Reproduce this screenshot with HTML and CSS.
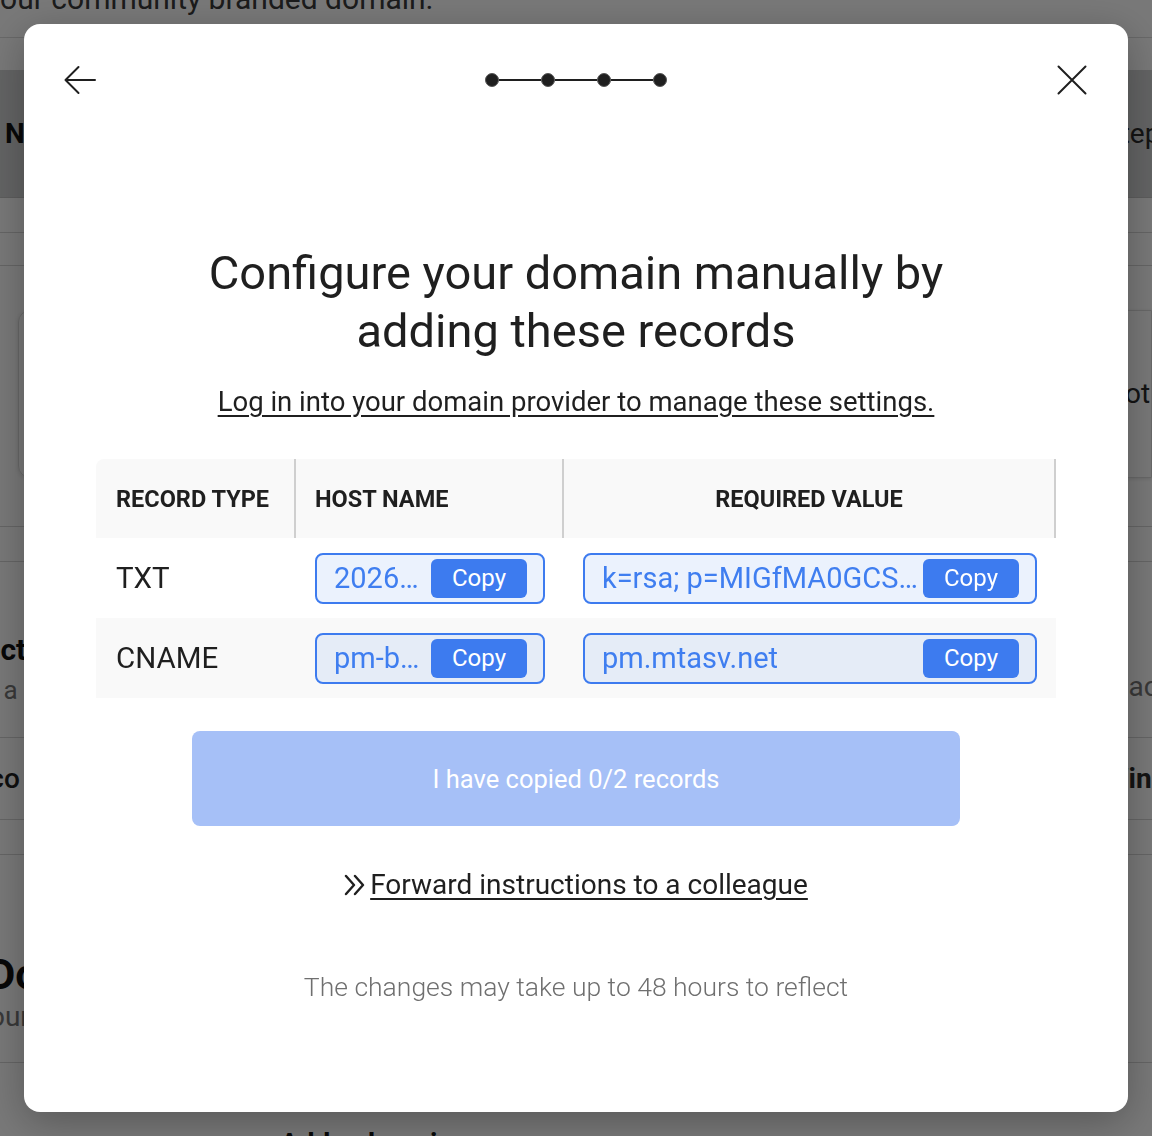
FILE: index.html
```html
<!DOCTYPE html>
<html>
<head>
	<meta charset="utf-8">
	<title>Custom domain</title>
	<link rel="stylesheet" href="styles.css">
</head>
<body>
	<!-- settings page behind the dialog -->
	<div class="page">
		<div class="intro"><p>Your community branded domain.</p></div>
		<div class="band bgRow">
			<span class="l bold">Name</span>
			<span class="r">Step</span>
		</div>
		<div class="line h35"></div>
		<div class="line h33"></div>
		<div class="bgCard bgRow">
			<span class="l"></span>
			<span class="r">Not</span>
		</div>
		<div class="line h49"></div>
		<div class="line h35"></div>
		<div class="bgSection">
			<div class="bgRow"><span class="l bold secTitle">Connect</span><span class="r"></span></div>
			<div class="bgRow"><span class="l grey secSub">Use a</span><span class="r grey">Place</span></div>
		</div>
		<div class="bgRow bgItem">
			<span class="l medium itemName">Deco</span>
			<span class="r bold">Win</span>
		</div>
		<div class="line h35"></div>
		<div class="bgSection tall">
			<div class="bgRow"><span class="l bold headTitle">Domain</span><span class="r"></span></div>
			<div class="bgRow"><span class="l grey headSub">Your</span><span class="r"></span></div>
		</div>
		<div class="bgRow bgFoot"><span class="l bold footText">Add a domain</span></div>
	</div>

	<div class="overlay">
		<div class="modal">
			<div class="topBar">
				<button class="iconBtn" title="Back">
					<svg width="32" height="32" viewBox="0 0 32 32" fill="none" stroke="#1f1f1f" stroke-width="2" stroke-linecap="round" stroke-linejoin="round">
						<path d="M31 16H1.5M14.5 3L1.5 16l13 13"/>
					</svg>
				</button>
				<div class="stepper">
					<span class="dot"></span><span class="link"></span>
					<span class="dot"></span><span class="link"></span>
					<span class="dot"></span><span class="link"></span>
					<span class="dot"></span>
				</div>
				<button class="iconBtn" title="Close">
					<svg width="32" height="32" viewBox="0 0 32 32" fill="none" stroke="#1f1f1f" stroke-width="2" stroke-linecap="round">
						<path d="M2.5 2.5l27 27M29.5 2.5l-27 27"/>
					</svg>
				</button>
			</div>

			<h1 class="title">Configure your domain manually by adding these records</h1>
			<a href="#" class="subLink">Log in into your domain provider to manage these settings.</a>

			<div class="records">
				<div class="recRow recHead">
					<div class="cell">RECORD TYPE</div>
					<div class="cell">HOST NAME</div>
					<div class="cell center">REQUIRED VALUE</div>
				</div>
				<div class="recRow">
					<div class="cell">TXT</div>
					<div class="cell">
						<div class="copyField"><span class="val">20260318pm._domainkey</span><button class="copyBtn">Copy</button></div>
					</div>
					<div class="cell">
						<div class="copyField"><span class="val">k=rsa; p=MIGfMA0GCSqGSIb3DQEBAQUAA4GNADCBiQKBgQC</span><button class="copyBtn">Copy</button></div>
					</div>
				</div>
				<div class="recRow alt">
					<div class="cell">CNAME</div>
					<div class="cell">
						<div class="copyField"><span class="val">pm-bounces</span><button class="copyBtn">Copy</button></div>
					</div>
					<div class="cell">
						<div class="copyField"><span class="val">pm.mtasv.net</span><button class="copyBtn">Copy</button></div>
					</div>
				</div>
			</div>

			<button class="doneBtn" disabled>I have copied 0/2 records</button>

			<div class="forward">
				<svg width="24" height="24" viewBox="0 0 24 24" fill="none" stroke="#1f1f1f" stroke-width="2.4" stroke-linecap="round" stroke-linejoin="round">
					<path d="M2 3l8 9-8 9M11 3l8 9-8 9"/>
				</svg>
				<a href="#">Forward instructions to a colleague</a>
			</div>

			<p class="note">The changes may take up to 48 hours to reflect</p>
		</div>
	</div>
</body>
</html>
```

FILE: styles.css
```css
*{
	margin: 0;
	padding: 0;
	box-sizing: border-box;
}
body{
	width: 1152px;
	height: 1136px;
	overflow: hidden;
	background-color: #fff;
	font-family: Roboto, "Liberation Sans", sans-serif;
	color: #1f1f1f;
}

/* page behind */
.page{
	height: 1136px;
	overflow: hidden;
}
.bgRow{
	display: flex;
	align-items: center;
}
.bgRow .l{
	width: 1104px;
	flex-shrink: 0;
	white-space: nowrap;
	font-size: 28px;
	line-height: 34px;
}
.bgRow .r{
	white-space: nowrap;
	font-size: 28px;
	line-height: 34px;
	color: #2a2a2a;
}
.bold{ font-weight: 700; color: #111; }
.medium{ font-weight: 500; }
.grey{ color: #777 !important; }
.intro{
	display: flow-root;
	height: 38px;
	border-bottom: 1px solid #dcdcdc;
	margin-bottom: 32px;
}
.intro p{
	font-size: 30px;
	line-height: 34px;
	margin-top: -18px;
	margin-left: -17px;
	color: #3a3a3a;
}
.band{
	height: 128px;
	background-color: #d2d3d4;
	border-bottom: 1px solid #c4c4c4;
}
.band .l{ padding-left: 5px; }
.line{
	border-bottom: 1px solid #d6d6d6;
}
.h35{ height: 35px; }
.h33{ height: 33px; }
.h49{ height: 49px; }
.bgCard{
	height: 168px;
	margin: 44px 0 0 18px;
	border: 1px solid #dcdcdc;
	border-radius: 12px 0 0 12px;
	box-shadow: 0 1px 4px rgba(0,0,0,0.12);
}
.bgCard .l{ width: 1086px; }
.bgSection{
	height: 176px;
	border-bottom: 1px solid #d6d6d6;
	padding-top: 71px;
}
.secTitle{
	text-indent: -86px;
	font-size: 30px !important;
}
.secSub{
	font-size: 26px !important;
	text-indent: -47px;
	margin-top: 6px;
}
.bgItem{
	height: 82px;
	border-bottom: 1px solid #d6d6d6;
}
.itemName{
	text-indent: -44px;
}
.bgSection.tall{
	height: 208px;
	padding-top: 95px;
}
.headTitle{
	text-indent: -12px;
	font-size: 42px !important;
	line-height: 50px !important;
}
.headSub{
	text-indent: -27px;
}
.bgFoot{
	padding-top: 64px;
}
.footText{
	padding-left: 280px;
}

/* dialog */
.overlay{
	position: fixed;
	top: 0;
	left: 0;
	right: 0;
	bottom: 0;
	background-color: rgba(0,0,0,0.53);
	display: flex;
	padding: 24px;
}
.modal{
	flex: 1;
	background-color: #fff;
	border-radius: 16px;
	box-shadow: 0 10px 40px rgba(0,0,0,0.28);
	padding: 40px;
	display: flex;
	flex-direction: column;
	align-items: center;
}
.topBar{
	width: 100%;
	display: flex;
	justify-content: space-between;
	align-items: center;
}
.iconBtn{
	width: 32px;
	height: 32px;
	border: none;
	background: none;
	cursor: pointer;
}
.iconBtn svg{
	display: block;
}
.stepper{
	display: flex;
	align-items: center;
}
.dot{
	width: 14px;
	height: 14px;
	border-radius: 50%;
	background-color: #1f1f1f;
	border: 1px solid #555;
}
.link{
	width: 42px;
	height: 2px;
	background-color: #1f1f1f;
}
.title{
	margin-top: 148px;
	width: 780px;
	font-size: 47px;
	line-height: 58px;
	font-weight: 400;
	text-align: center;
}
.subLink{
	margin-top: 26px;
	font-size: 27.5px;
	line-height: 32px;
	color: #1f1f1f;
	text-decoration: underline;
	text-underline-offset: 4px;
}

.records{
	margin-top: 41px;
	width: 960px;
}
.recRow{
	display: grid;
	grid-template-columns: 200px 268px 492px;
	height: 80px;
}
.recRow .cell{
	display: flex;
	align-items: center;
	padding: 0 19px 0 20px;
	font-size: 29.5px;
	min-width: 0;
}
.recRow .cell:nth-child(n+2){
	padding: 0 19px;
}
.recHead{
	height: 79px;
	background-color: #f9f9f9;
	border-radius: 8px 0 0 0;
}
.recHead .cell{
	font-size: 23.5px;
	font-weight: 700;
	border-right: 2px solid #cfcfcf;
}
.recHead .center{
	justify-content: center;
}
.recRow.alt{
	background-color: #f9f9f9;
}
.copyField{
	width: 100%;
	height: 51px;
	display: flex;
	align-items: center;
	padding: 0 4px 0 17px;
	border: 2px solid #3d7bef;
	border-radius: 8px;
	background-color: rgba(61,123,239,0.1);
}
.val{
	flex: 1;
	min-width: 0;
	overflow: hidden;
	white-space: nowrap;
	text-overflow: ellipsis;
	color: #3f7ef0;
	font-size: 29px;
}
.copyBtn{
	width: 96px;
	height: 39px;
	margin-left: 2px;
	margin-right: 12px;
	border: none;
	border-radius: 6px;
	background-color: #3d7bef;
	color: #fff;
	font-family: Roboto, "Liberation Sans", sans-serif;
	font-size: 24px;
	flex-shrink: 0;
}

.doneBtn{
	margin-top: 33px;
	width: 768px;
	height: 95px;
	border: none;
	border-radius: 8px;
	background-color: #a6c0f7;
	color: #fff;
	font-family: Roboto, "Liberation Sans", sans-serif;
	font-size: 25.5px;
}
.forward{
	margin-top: 42px;
	display: flex;
	align-items: center;
	font-size: 28px;
	line-height: 34px;
}
.forward svg{
	margin-right: 2px;
}
.forward a{
	color: #1f1f1f;
	text-decoration: underline;
	text-underline-offset: 4px;
}
.note{
	margin-top: 69px;
	font-size: 26.5px;
	line-height: 32px;
	font-weight: 300;
	color: #6f6f6f;
}
```
